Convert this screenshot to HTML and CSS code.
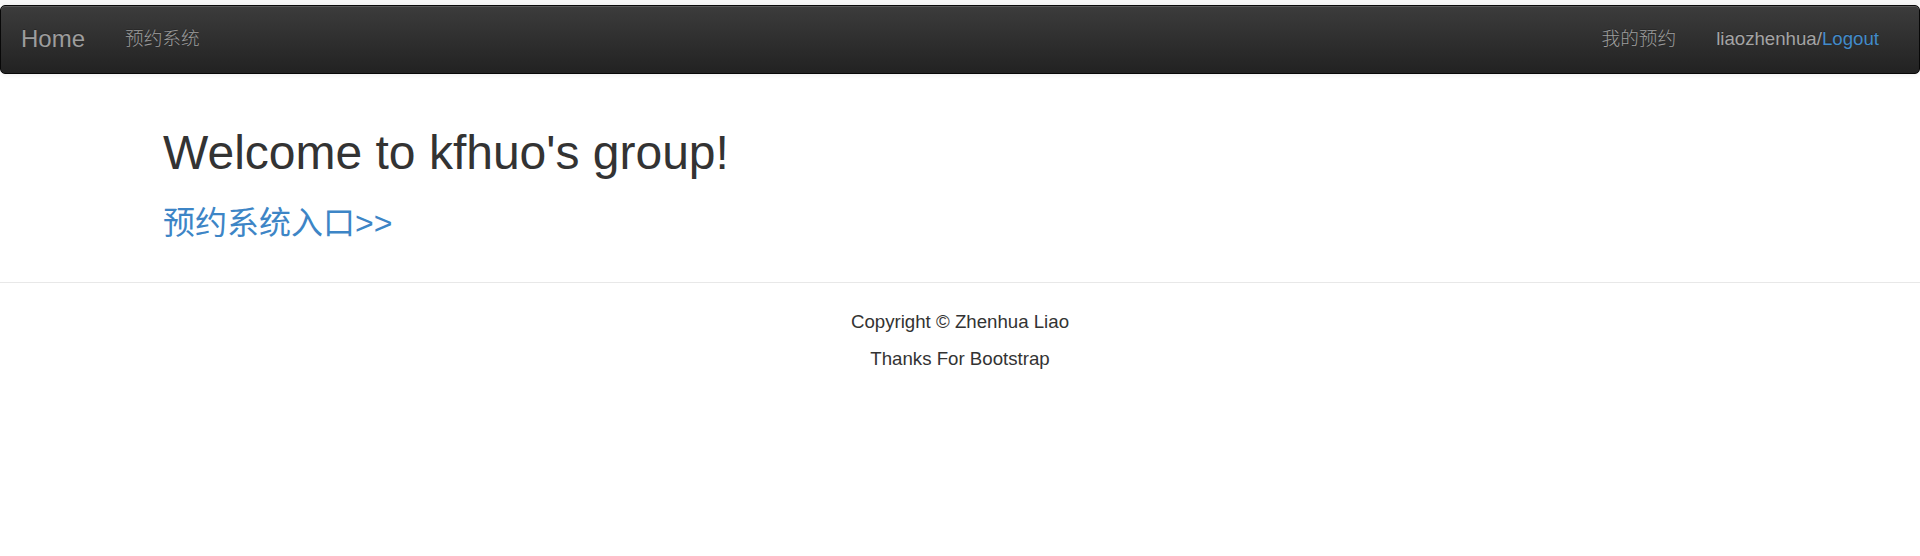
FILE: index.html
```html
<!DOCTYPE html>
<html lang="zh-CN">
<head>
<meta charset="utf-8">
<title>kfhuo's group</title>
<link rel="stylesheet" href="styles.css">
</head>
<body>
<div class="topstrip"></div>
<nav class="navbar">
  <div class="nav-left">
    <a class="brand" href="#">Home</a>
    <a class="nav-link" href="#">预约系统</a>
  </div>
  <div class="nav-right">
    <a class="nav-link" href="#">我的预约</a>
    <span class="nav-text">liaozhenhua/<a class="logout" href="#">Logout</a></span>
  </div>
</nav>
<main class="container">
  <h1 class="title">Welcome to kfhuo's group!</h1>
  <h3 class="entry"><a href="#">预约系统入口&gt;&gt;</a></h3>
</main>
<hr class="divider">
<footer class="footer">
  <p>Copyright © Zhenhua Liao</p>
  <p>Thanks For Bootstrap</p>
</footer>
</body>
</html>
```

FILE: styles.css
```css
html, body {
  margin: 0;
  padding: 0;
  background: #fff;
}
body {
  font-family: "Liberation Sans", Arial, "Noto Sans CJK SC", sans-serif;
  font-size: 18.67px;
  line-height: 26.67px;
  color: #333;
}
a {
  text-decoration: none;
}
.topstrip {
  height: 5px;
  background: #f6f6f6;
}
.navbar {
  display: flex;
  justify-content: space-between;
  height: 66.67px;
  border: 1px solid #080808;
  border-radius: 5px;
  background: linear-gradient(to bottom, #3c3c3c 0%, #222 100%);
  box-shadow: inset 0 1px 0 rgba(255,255,255,.15), 0 1px 5px rgba(0,0,0,.075);
  margin-bottom: 26.67px;
}
.nav-left, .nav-right {
  display: flex;
}
.nav-right {
  padding-right: 20px;
}
.brand {
  padding: 20px;
  font-size: 24px;
  line-height: 26.67px;
  color: #9d9d9d;
  text-shadow: 0 -1px 0 rgba(0,0,0,.25);
}
.nav-link {
  padding: 20px;
  color: #9d9d9d;
  font-weight: 300;
  text-shadow: 0 -1px 0 rgba(0,0,0,.25);
}
.nav-text {
  padding: 20px 0;
  margin: 0 20px;
  color: #a4a4a4;
  text-shadow: 0 -1px 0 rgba(0,0,0,.25);
}
.logout {
  color: #428bca;
}
.container {
  display: flow-root;
  padding: 0 163px;
}
.title {
  font-size: 48px;
  line-height: 1.1;
  font-weight: 500;
  color: #333;
  margin: 26.67px 0 13.33px;
}
.entry {
  font-size: 32px;
  line-height: 1.1;
  font-weight: 400;
  margin: 26.67px 0 13.33px;
}
.entry a {
  color: #3d85c6;
}
.divider {
  margin: 26.67px 0;
  border: 0;
  border-top: 1px solid #e8e8e8;
  height: 0;
}
.footer {
  text-align: center;
}
.footer p {
  margin: 0 0 10.3px;
}
```
